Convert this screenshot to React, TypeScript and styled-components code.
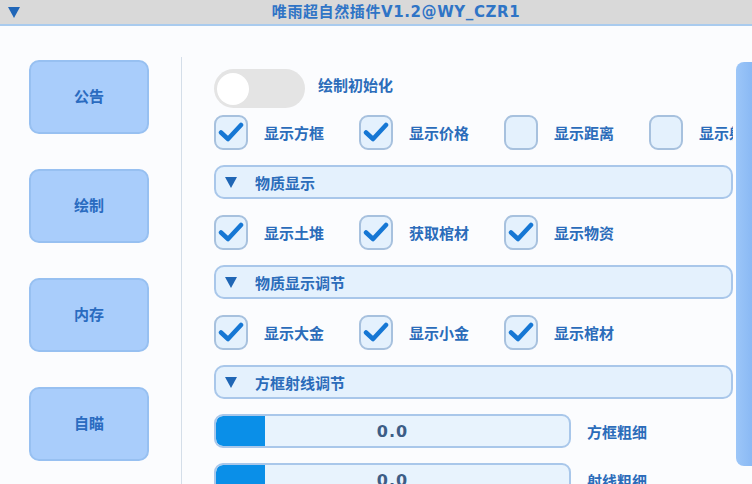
import React from "react";
import styled, { createGlobalStyle } from "styled-components";

const Global = createGlobalStyle`
  html, body { margin: 0; padding: 0; }
  body {
    background: #fbfcfe;
    font-family: "Noto Sans CJK SC", "Noto Sans", sans-serif;
    width: 752px;
    height: 484px;
    overflow: hidden;
  }
  * { box-sizing: border-box; }
`;

const Page = styled.div`
  width: 752px;
  height: 484px;
  display: flex;
  flex-direction: column;
  overflow: hidden;
`;

const TitleBar = styled.div`
  height: 26px;
  flex: none;
  background: #d9d9d9;
  border-bottom: 2px solid #a9cbee;
  display: grid;
  grid-template-columns: 32px 1fr 32px;
  align-items: center;
`;

const TitleArrow = styled.span`
  justify-self: start;
  margin-left: 8px;
  width: 0;
  height: 0;
  border-left: 6px solid transparent;
  border-right: 6px solid transparent;
  border-top: 11px solid #2066b8;
`;

const TitleText = styled.div`
  text-align: center;
  padding-left: 40px;
  font-family: "DejaVu Sans", "Noto Sans CJK SC", sans-serif;
  font-weight: 700;
  font-size: 15px;
  letter-spacing: 0.6px;
  color: #2f74c6;
  line-height: 24px;
`;

const Main = styled.div`
  flex: 1;
  display: flex;
  padding-top: 31px;
  min-height: 0;
`;

const Sidebar = styled.nav`
  width: 182px;
  flex: none;
  border-right: 1px solid #d4dee9;
  padding: 3px 0 0 29px;
  display: flex;
  flex-direction: column;
  gap: 35px;
`;

const NavButton = styled.div`
  width: 120px;
  height: 74px;
  flex: none;
  border-radius: 10px;
  background: #a9cdfb;
  border: 2px solid #97c0f1;
  display: flex;
  align-items: center;
  justify-content: center;
  color: #2a6bc0;
  font-weight: 700;
  font-size: 15px;
  padding-bottom: 3px;
`;

const Content = styled.div`
  flex: 1;
  min-width: 0;
  overflow: hidden;
  padding: 12px 3px 0 32px;
  display: flex;
  flex-direction: column;
  gap: 15px;
`;

const ToggleRow = styled.div`
  display: flex;
  align-items: center;
  gap: 13px;
  height: 39px;
  flex: none;
  margin-bottom: -9px;
`;

const Toggle = styled.div`
  width: 91px;
  height: 39px;
  border-radius: 20px;
  background: #e4e4e4;
  display: flex;
  align-items: center;
  padding-left: 3px;
`;

const Knob = styled.span`
  width: 32px;
  height: 32px;
  border-radius: 50%;
  background: #ffffff;
`;

const Label = styled.span`
  color: #2b6cba;
  font-weight: 700;
  font-size: 15px;
  white-space: nowrap;
  margin-top: -8px;
`;

const CheckRow = styled.div`
  display: flex;
  height: 36px;
  flex: none;
  align-items: center;
  overflow: hidden;
`;

const CheckItem = styled.div`
  width: 145px;
  flex: none;
  display: flex;
  align-items: center;
  gap: 16px;
`;

const Box = styled.div`
  width: 34px;
  height: 35px;
  flex: none;
  border-radius: 9px;
  background: #e4f1fd;
  border: 2px solid #a7c1de;
  display: flex;
  align-items: center;
  justify-content: center;
`;

const CheckLabel = styled.span`
  color: #2b6cba;
  font-weight: 700;
  font-size: 15px;
  white-space: nowrap;
`;

const Header = styled.div`
  height: 34px;
  flex: none;
  border-radius: 10px;
  background: #e4f1fd;
  border: 2px solid #a9c7ea;
  display: flex;
  align-items: center;
  padding-left: 9px;
  gap: 18px;
`;

const HeaderArrow = styled.span`
  width: 0;
  height: 0;
  border-left: 6px solid transparent;
  border-right: 6px solid transparent;
  border-top: 11px solid #1f66b5;
`;

const HeaderText = styled.span`
  color: #2b6cba;
  font-weight: 700;
  font-size: 15px;
`;

const SliderRow = styled.div`
  height: 34px;
  flex: none;
  display: flex;
  align-items: center;
  gap: 16px;
`;

const Track = styled.div`
  position: relative;
  width: 357px;
  height: 34px;
  border-radius: 9px;
  background: #e8f3fd;
  border: 2px solid #a9c7ea;
  overflow: hidden;
  display: flex;
  align-items: center;
  justify-content: center;
`;

const Fill = styled.div`
  position: absolute;
  left: 0;
  top: 0;
  bottom: 0;
  background: #0a8fe8;
  border-radius: 7px 0 0 7px;
`;

const Value = styled.span`
  position: relative;
  font-family: "DejaVu Sans", sans-serif;
  font-weight: 700;
  font-size: 16px;
  color: #3d5d86;
  letter-spacing: 1px;
`;

const ScrollTrack = styled.div`
  width: 16px;
  flex: none;
  padding-top: 5px;
  padding-bottom: 18px;
  display: flex;
`;

const Thumb = styled.div`
  flex: 1;
  border-radius: 8px 0 0 8px;
  background: linear-gradient(90deg, #9cc6f8, #8ab9f4);
`;

const Check = () => (
  <svg width="26" height="22" viewBox="0 0 26 22">
    <path
      d="M3 11.5 L10 18 L23 4"
      fill="none"
      stroke="#1677d4"
      strokeWidth="4.5"
      strokeLinecap="round"
      strokeLinejoin="round"
    />
  </svg>
);

type Item = { label: string; checked: boolean };

const CheckGroup = ({ items }: { items: Item[] }) => (
  <CheckRow>
    {items.map((it) => (
      <CheckItem key={it.label}>
        <Box>{it.checked && <Check />}</Box>
        <CheckLabel>{it.label}</CheckLabel>
      </CheckItem>
    ))}
  </CheckRow>
);

const Section = ({ title }: { title: string }) => (
  <Header>
    <HeaderArrow />
    <HeaderText>{title}</HeaderText>
  </Header>
);

const Slider = ({ value, label, pct }: { value: string; label: string; pct: number }) => (
  <SliderRow>
    <Track>
      <Fill style={{ width: `${pct}%` }} />
      <Value>{value}</Value>
    </Track>
    <CheckLabel>{label}</CheckLabel>
  </SliderRow>
);

export default function App() {
  return (
    <Page>
      <Global />
      <TitleBar>
        <TitleArrow />
        <TitleText>唯雨超自然插件V1.2@WY_CZR1</TitleText>
        <span />
      </TitleBar>
      <Main>
        <Sidebar>
          <NavButton>公告</NavButton>
          <NavButton>绘制</NavButton>
          <NavButton>内存</NavButton>
          <NavButton>自瞄</NavButton>
        </Sidebar>
        <Content>
          <ToggleRow>
            <Toggle>
              <Knob />
            </Toggle>
            <Label>绘制初始化</Label>
          </ToggleRow>
          <CheckGroup
            items={[
              { label: "显示方框", checked: true },
              { label: "显示价格", checked: true },
              { label: "显示距离", checked: false },
              { label: "显示射线", checked: false },
            ]}
          />
          <Section title="物质显示" />
          <CheckGroup
            items={[
              { label: "显示土堆", checked: true },
              { label: "获取棺材", checked: true },
              { label: "显示物资", checked: true },
            ]}
          />
          <Section title="物质显示调节" />
          <CheckGroup
            items={[
              { label: "显示大金", checked: true },
              { label: "显示小金", checked: true },
              { label: "显示棺材", checked: true },
            ]}
          />
          <Section title="方框射线调节" />
          <Slider value="0.0" label="方框粗细" pct={14} />
          <Slider value="0.0" label="射线粗细" pct={14} />
        </Content>
        <ScrollTrack>
          <Thumb />
        </ScrollTrack>
      </Main>
    </Page>
  );
}
